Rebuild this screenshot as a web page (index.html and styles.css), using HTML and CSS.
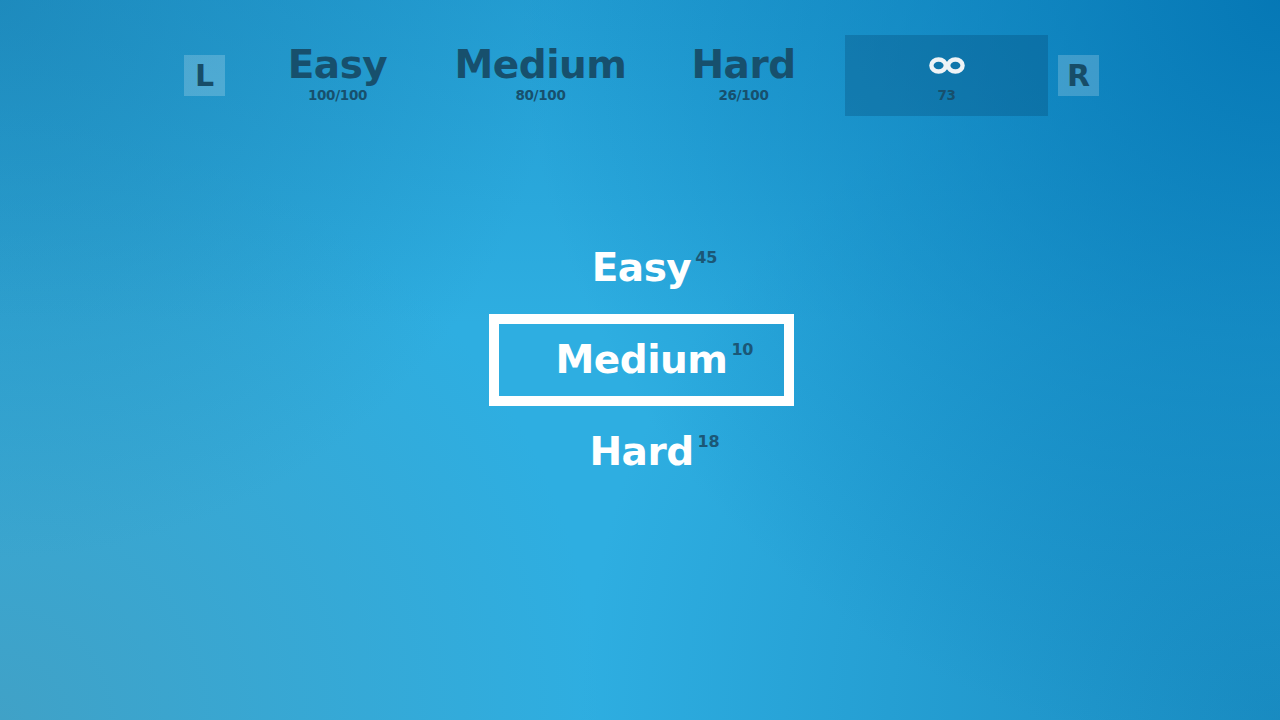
FILE: index.html
```html
<!DOCTYPE html>
<html lang="en">
<head>
<meta charset="utf-8">
<title>Difficulty</title>
<link rel="stylesheet" href="styles.css">
</head>
<body>
<div class="screen">
  <nav class="tabs">
    <div class="bumper">L</div>
    <div class="tab">
      <div class="tab-title">Easy</div>
      <div class="tab-sub">100/100</div>
    </div>
    <div class="tab">
      <div class="tab-title">Medium</div>
      <div class="tab-sub">80/100</div>
    </div>
    <div class="tab">
      <div class="tab-title">Hard</div>
      <div class="tab-sub">26/100</div>
    </div>
    <div class="tab tab-active">
      <div class="tab-title">
        <svg class="inf" width="36" height="17" viewBox="0 0 36 17" aria-label="infinity">
          <ellipse cx="9.6" cy="8.5" rx="7.2" ry="6" fill="none" stroke="#eef3f6" stroke-width="4.4"/>
          <ellipse cx="26.4" cy="8.5" rx="7.2" ry="6" fill="none" stroke="#eef3f6" stroke-width="4.4"/>
        </svg>
      </div>
      <div class="tab-sub">73</div>
    </div>
    <div class="bumper">R</div>
  </nav>

  <ul class="list">
    <li class="item"><span class="word">Easy<span class="count">45</span></span></li>
    <li class="item item-selected"><span class="word">Medium<span class="count">10</span></span></li>
    <li class="item"><span class="word">Hard<span class="count">18</span></span></li>
  </ul>
</div>
</body>
</html>
```

FILE: styles.css
```css
html, body {
  margin: 0;
  padding: 0;
  width: 1280px;
  height: 720px;
  overflow: hidden;
}

body {
  font-family: "DejaVu Sans", "Noto Sans", sans-serif;
  font-weight: 700;
  background:
    radial-gradient(circle 950px at 100% 0%, rgba(4, 118, 180, 0.95) 0%, rgba(4, 118, 180, 0.45) 40%, rgba(4, 118, 180, 0) 80%),
    linear-gradient(to bottom, rgba(14, 126, 184, 0.35) 0%, rgba(14, 126, 184, 0) 45%),
    radial-gradient(circle 560px at 0% 0%, rgba(36, 140, 186, 0.85) 0%, rgba(36, 140, 186, 0) 100%),
    radial-gradient(circle 600px at 0% 100%, rgba(66, 160, 196, 0.9) 0%, rgba(66, 160, 196, 0) 100%),
    radial-gradient(circle 700px at 100% 100%, rgba(22, 134, 188, 0.85) 0%, rgba(22, 134, 188, 0) 100%),
    #2eaee1;
}

.screen {
  display: flex;
  flex-direction: column;
  align-items: center;
  padding-top: 35px;
  padding-left: 3px;
}

.tabs {
  display: flex;
  align-items: center;
  height: 81px;
}

.bumper {
  width: 41px;
  height: 41px;
  background: rgba(255, 255, 255, 0.2);
  color: #174d68;
  font-size: 30px;
  line-height: 41px;
  text-align: center;
}

.bumper:first-child {
  margin-right: 11px;
}

.bumper:last-child {
  margin-left: 10px;
}

.tab {
  box-sizing: border-box;
  width: 203px;
  height: 81px;
  padding-bottom: 4px;
  display: flex;
  flex-direction: column;
  align-items: center;
  justify-content: center;
  gap: 3px;
  color: #17506d;
}

.tab-active {
  background: rgba(0, 55, 95, 0.25);
}

.tab-title {
  font-size: 39px;
  line-height: 40px;
  height: 40px;
  letter-spacing: -0.5px;
  display: flex;
  align-items: center;
  justify-content: center;
}

.tab-sub {
  font-size: 13.5px;
  line-height: 14px;
  letter-spacing: -0.3px;
}

.inf {
  display: block;
}

.list {
  list-style: none;
  margin: 106px 0 0;
  padding: 0;
  display: flex;
  flex-direction: column;
}

.item {
  box-sizing: border-box;
  width: 305px;
  height: 92px;
  border: 10px solid transparent;
  display: flex;
  align-items: center;
  justify-content: center;
  color: #ffffff;
}

.item-selected {
  border-color: #ffffff;
}

.word {
  position: relative;
  display: inline-block;
  font-size: 39px;
  line-height: 40px;
  letter-spacing: -0.5px;
}

.count {
  position: absolute;
  left: calc(100% + 4px);
  top: 2px;
  font-size: 16px;
  line-height: 16px;
  letter-spacing: -0.3px;
  color: #1b5776;
}
```
